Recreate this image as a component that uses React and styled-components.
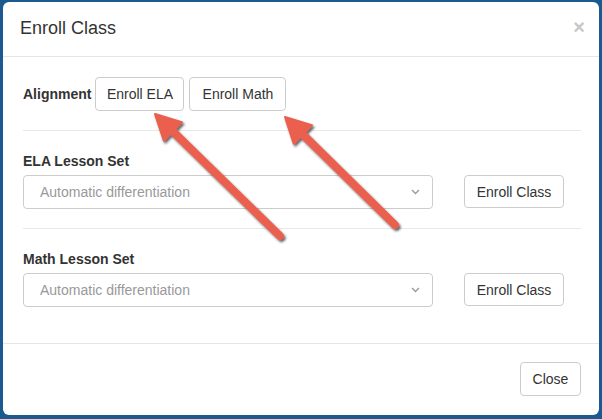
import React from "react";
import styled, { createGlobalStyle } from "styled-components";

const Global = createGlobalStyle`
  html, body { margin: 0; padding: 0; }
  body {
    background: #1a5a8f;
    font-family: "Liberation Sans", Arial, Helvetica, sans-serif;
    font-size: 14px;
    color: #333;
  }
  * { box-sizing: border-box; }
`;

const Frame = styled.div`
  width: 602px;
  height: 419px;
  padding: 2px 3px 4px 3px;
  display: flex;
`;

const Modal = styled.div`
  position: relative;
  flex: 1;
  background: #fff;
  border-radius: 6px;
  display: flex;
  flex-direction: column;
  overflow: hidden;
`;

const Header = styled.div`
  display: flex;
  align-items: center;
  justify-content: space-between;
  height: 55px;
  padding: 0 14px 2px 17px;
  border-bottom: 1px solid #e5e5e5;
`;

const Title = styled.h4`
  margin: 0;
  font-size: 18px;
  font-weight: 400;
  color: #333;
`;

const CloseX = styled.span`
  font-size: 20px;
  font-weight: 700;
  color: #c8c8c8;
  line-height: 1;
  margin-top: -3px;
`;

const Body = styled.div`
  flex: 1;
  padding: 20px 18px 0 20px;
  display: flex;
  flex-direction: column;
`;

const AlignRow = styled.div`
  display: flex;
  align-items: center;
  gap: 5px;
  height: 34px;
`;

const Strong = styled.span`
  font-weight: 700;
  font-size: 14px;
  color: #333;
  margin-right: -1px;
`;

const Btn = styled.button`
  font-family: inherit;
  font-size: 14px;
  color: #333;
  background: #fff;
  border: 1px solid #ccc;
  border-radius: 4px;
  height: ${(p) => p.$h || 34}px;
  padding: 0;
  width: ${(p) => p.$w}px;
  white-space: nowrap;
  line-height: 1;
  cursor: pointer;
  flex-shrink: 0;
`;

const Divider = styled.hr`
  border: 0;
  border-top: 1px solid #e8e8e8;
  margin: 19px 0 0 0;
  width: 100%;
`;

const Group = styled.div`
  padding-top: 20px;
  display: flex;
  flex-direction: column;
`;

const Label = styled.div`
  font-weight: 700;
  font-size: 14px;
  line-height: 20px;
  margin-bottom: 4px;
  color: #333;
`;

const FieldRow = styled.div`
  display: flex;
  align-items: flex-start;
  gap: 31px;
`;

const Select = styled.div`
  width: 410px;
  height: 34px;
  border: 1px solid #ccc;
  border-radius: 4px;
  display: flex;
  align-items: center;
  justify-content: space-between;
  padding: 0 12px 0 16px;
  color: #999;
  font-size: 14px;
`;

const Footer = styled.div`
  border-top: 1px solid #e5e5e5;
  height: 72px;
  display: flex;
  align-items: center;
  justify-content: flex-end;
  padding: 0 18px 2px 0;
`;

const Arrows = styled.svg`
  position: absolute;
  left: -3px;
  top: -2px;
  width: 602px;
  height: 419px;
  pointer-events: none;
`;

const Chevron = () => (
  <svg width="9" height="6" viewBox="0 0 9 6">
    <path d="M1 1 L4.5 4.5 L8 1" fill="none" stroke="#9a9a9a" strokeWidth="1.4" />
  </svg>
);

function arrowPoints(tip, tail, headLen = 25, headHalf = 13) {
  const dx = tail[0] - tip[0];
  const dy = tail[1] - tip[1];
  const len = Math.hypot(dx, dy);
  const ux = dx / len;
  const uy = dy / len;
  const px = -uy;
  const py = ux;
  const bx = tip[0] + ux * headLen;
  const by = tip[1] + uy * headLen;
  return { bx, by, px, py, ux, uy, headHalf };
}

const Arrow = ({ tip, tail }) => {
  const a = arrowPoints(tip, tail);
  const head = [
    [tip[0], tip[1]],
    [a.bx + a.px * a.headHalf, a.by + a.py * a.headHalf],
    [a.bx - a.px * a.headHalf, a.by - a.py * a.headHalf],
  ]
    .map((p) => p.join(","))
    .join(" ");
  return (
    <g filter="url(#shadow)">
      <line
        x1={a.bx - a.ux * 4}
        y1={a.by - a.uy * 4}
        x2={tail[0]}
        y2={tail[1]}
        stroke="#ea5f4e"
        strokeWidth="8"
        strokeLinecap="round"
      />
      <polygon points={head} fill="#ea5f4e" strokeLinejoin="round" stroke="#ea5f4e" strokeWidth="2" />
    </g>
  );
};

export default function App() {
  return (
    <>
      <Global />
      <Frame>
        <Modal>
          <Header>
            <Title>Enroll Class</Title>
            <CloseX>×</CloseX>
          </Header>
          <Body>
            <AlignRow>
              <Strong>Alignment</Strong>
              <Btn $w={89}>Enroll ELA</Btn>
              <Btn $w={97}>Enroll Math</Btn>
            </AlignRow>
            <Divider />
            <Group>
              <Label>ELA Lesson Set</Label>
              <FieldRow>
                <Select>
                  <span>Automatic differentiation</span>
                  <Chevron />
                </Select>
                <Btn $w={100} $h={33}>Enroll Class</Btn>
              </FieldRow>
            </Group>
            <Divider />
            <Group>
              <Label>Math Lesson Set</Label>
              <FieldRow>
                <Select>
                  <span>Automatic differentiation</span>
                  <Chevron />
                </Select>
                <Btn $w={100} $h={33}>Enroll Class</Btn>
              </FieldRow>
            </Group>
          </Body>
          <Footer>
            <Btn $w={61}>Close</Btn>
          </Footer>
          <Arrows viewBox="0 0 602 419">
            <defs>
              <filter id="shadow" x="-20%" y="-20%" width="140%" height="140%">
                <feDropShadow dx="1.5" dy="2" stdDeviation="1.3" floodColor="#333" floodOpacity="0.75" />
              </filter>
            </defs>
            <Arrow tip={[155, 114]} tail={[280, 236]} />
            <Arrow tip={[285, 117]} tail={[395, 225]} />
          </Arrows>
        </Modal>
      </Frame>
    </>
  );
}
